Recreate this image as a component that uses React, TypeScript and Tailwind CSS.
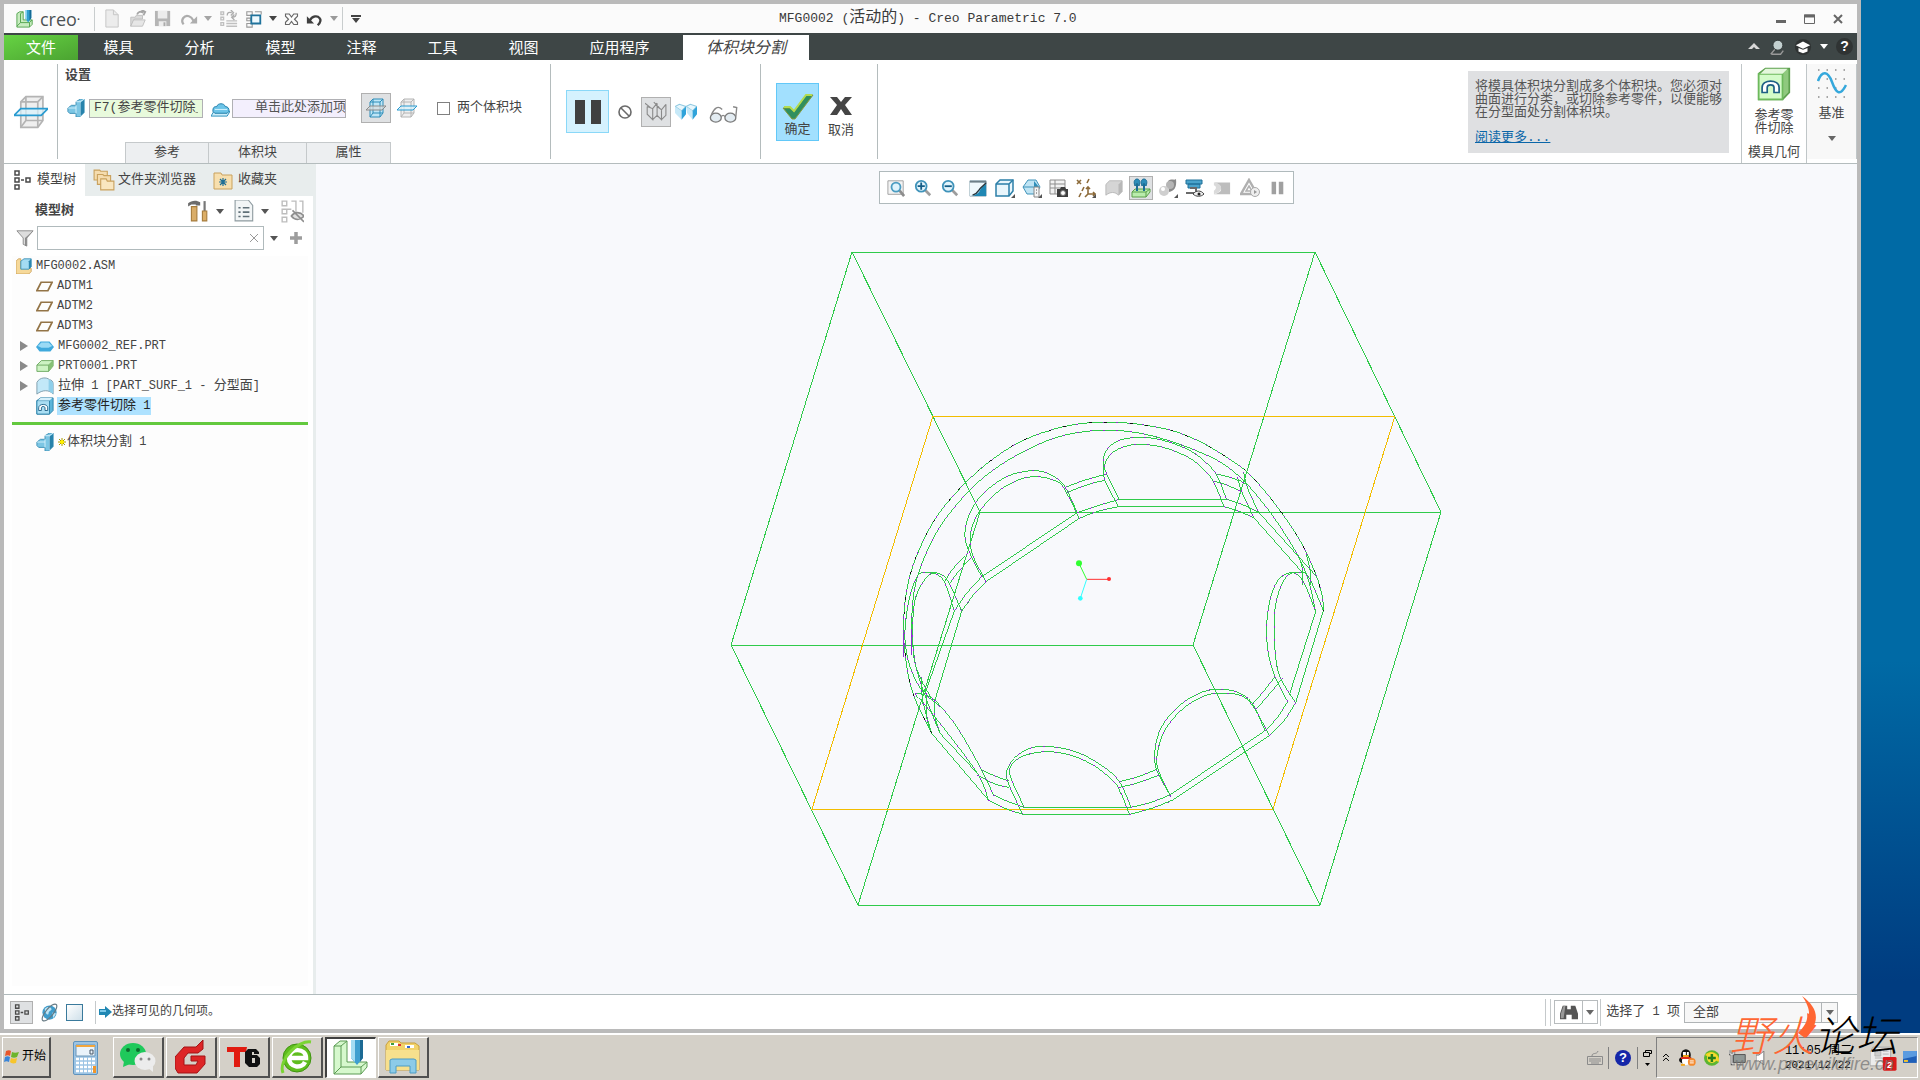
import React from 'react';

type IconProps = { size?: number; className?: string; children: React.ReactNode };

const Icon = ({ size = 20, className = '', children }: IconProps) => (
  <svg width={size} height={size} viewBox="0 0 20 20" fill="none" className={`shrink-0 ${className}`} aria-hidden="true">
    {children}
  </svg>
);

const Caret = ({ className = '' }: { className?: string }) => (
  <svg width="8" height="5" viewBox="0 0 8 5" className={`shrink-0 ${className}`} fill="currentColor" aria-hidden="true">
    <path d="M0 0h8L4 5z" />
  </svg>
);

// Chinese runs keep the parent size, latin runs are set a step smaller in mono
const Mixed = ({ text, latin = 'text-xs' }: { text: string; latin?: string }) => (
  <>
    {text.split(/([\x20-\x7e]+)/).map((part, i) =>
      i % 2 ? <span key={i} className={`whitespace-pre ${latin}`}>{part}</span> : part
    )}
  </>
);

/* ---------- icons ---------- */

const CreoMark = ({ size = 20 }: { size?: number }) => (
  <Icon size={size}>
    <path d="M1 4l3-2h4v9h10v5l-3 3H1z" fill="#c8ecc0" stroke="#4ea14a" />
    <path d="M5 4v10h10M5 14l-4 4M5 4l3-2M15 14l3-3M15 14v5" stroke="#4ea14a" />
    <path d="M10 0h7v9l-3.500 5L10 9z" fill="#2f9fd0" />
    <path d="M10 0h2v11l-2-2z" fill="#9bdcf4" />
    <path d="M15 0h2v9l-2 3z" fill="#146a94" />
  </Icon>
);

const SplitCube = ({ size = 20, blue = false }: { size?: number; blue?: boolean }) => {
  const line = blue ? '#2f8db8' : '#b4b4b4';
  return (
    <Icon size={size}>
      <path d="M4 4l3-3h10v14l-3 4H4z" fill={blue ? '#bfe6f7' : '#efefef'} stroke={line} />
      <path d="M4 4h10v15M14 4l3-3M7 1v14h10M7 15l-3 4" stroke={line} />
      <path d="M0 12l4-4h16l-4 4z" fill={blue ? '#dddddd' : '#d9f2fc'} fillOpacity=".7" stroke={blue ? '#8b8b8b' : '#2a9bd0'} />
    </Icon>
  );
};

const VolumeIcon = ({ size = 18 }: { size?: number }) => (
  <Icon size={size}>
    <path d="M1 10l4-3h5V3l5-3h4v15l-5 5h-4v-4H3l-2-2z" fill="#7cc6e4" stroke="#3a8fb5" />
    <path d="M10 3h5v16M15 3l4-3M1 10h9M10 7v9" stroke="#d6f2fd" />
    <path d="M15 4l4-3v14l-4 4z" fill="#2782ab" />
  </Icon>
);

const PartDome = ({ size = 18 }: { size?: number }) => (
  <Icon size={size}>
    <path d="M0 11l5-6h10l5 6-4 5H4z" fill="#3fa9dc" />
    <path d="M2 10l4-4h8l4 4-4 2H6z" fill="#9adaf5" />
  </Icon>
);

const DomeOnPlate = () => (
  <Icon size={19}>
    <path d="M0 18l3-5h17l-3 5z" fill="#cdeefa" stroke="#2a8fbd" />
    <path d="M2 13c0-4 1-5 4-5 1-4 8-4 9 0 3 0 4 2 4 5l-2 2H4z" fill="#6cc4e8" stroke="#1f7ba8" />
    <path d="M4 11h13" stroke="#d6f2fd" />
  </Icon>
);

const CutIcon = ({ size = 18, green = false }: { size?: number; green?: boolean }) => (
  <Icon size={size}>
    <path d="M1 4l4-3h14v14l-4 4H1z" fill={green ? '#8fc97e' : '#5cb5da'} stroke={green ? '#5da04e' : '#2880a8'} />
    <path d="M1 4h14v15H1z" fill={green ? '#d3fbc9' : '#a9def3'} stroke={green ? '#6db95c' : '#2880a8'} />
    <path d="M2 4l3-3h13l-3 3z" fill={green ? '#e4f7dc' : '#d5f0fb'} />
    <path d="M3 15v-3c0-5 10-5 10 0v3h-3v-3c0-2-4-2-4 0v3z" fill="#fff" stroke="#1d5f84" />
  </Icon>
);

const TreeIcon = ({ size = 18, color = '#4a4a4a' }: { size?: number; color?: string }) => (
  <Icon size={size}>
    <path d="M3 1h4v4H3zM3 8h4v4H3zM3 15h4v4H3zM14 8h4v4h-4zM9 10h3" stroke={color} strokeWidth="1.500" />
  </Icon>
);

const PlaneIcon = () => (
  <Icon size={17}>
    <path d="M1 15L6 5h13l-5 10z" stroke="#937447" strokeWidth="2" />
  </Icon>
);

const AsmIcon = () => (
  <Icon size={16}>
    <path d="M0 4l3-3h3v12h13v4l-3 3H0z" fill="#f6d99a" stroke="#c99c52" />
    <path d="M6 4l4-3h9v10l-3 3H6z" fill="#a4dcf3" stroke="#2a86ae" />
    <path d="M16 4l3-3v10l-3 3z" fill="#2d88b0" />
  </Icon>
);

const GreenPart = () => (
  <Icon size={18}>
    <path d="M1 9l5-5h13v6l-5 6H1z" fill="#cdf3c3" stroke="#6aa65e" />
    <path d="M1 9h13l5-5M14 9v7" stroke="#6aa65e" />
    <path d="M14 9l5-5v6l-5 6z" fill="#86c077" />
  </Icon>
);

const SurfIcon = () => (
  <Icon size={18}>
    <path d="M1 19V6c3-6 11-6 14-3 2 0 4 2 4 4v12c-4-5-12-5-18 0z" fill="#c2e8f8" stroke="#7a98a8" />
    <path d="M14 3c2 0 5 2 5 5v11l-5-4z" fill="#8fcfea" />
  </Icon>
);

const Magnifier = ({ sign }: { sign?: '+' | '-' }) => (
  <Icon size={18}>
    <path d="M12 12l6 6" stroke="#9d9d9d" strokeWidth="3" />
    <circle cx="8" cy="8" r="6" fill="#e2f4fc" stroke="#3f93ba" strokeWidth="2" />
    {sign && <path d={sign === '+' ? 'M4 8h8M8 4v8' : 'M4 8h8'} stroke="#155d86" strokeWidth="2" />}
  </Icon>
);

const Corner = () => <path d="M20 16v4h-4z" fill="#555" />;

const viewTools: { label: string; active?: boolean; icon: React.ReactNode }[] = [
  {
    label: '重新调整',
    icon: (
      <Icon size={18}>
        <path d="M1 2h17v15H1z" fill="#f3f3f3" stroke="#9d9d9d" />
        <path d="M14 13l5 6" stroke="#8d8d8d" strokeWidth="3" />
        <circle cx="10" cy="9" r="5" fill="#dff3fc" stroke="#4b9cc1" strokeWidth="2" />
      </Icon>
    ),
  },
  { label: '放大', icon: <Magnifier sign="+" /> },
  { label: '缩小', icon: <Magnifier sign="-" /> },
  {
    label: '重画',
    icon: (
      <Icon size={18}>
        <path d="M1 2h18v17H1z" fill="#b9dceb" stroke="#8aa4b0" />
        <path d="M19 5v14H5c3-3 5-2 7-6 1-3 4-5 7-8z" fill="#1f87b3" />
        <path d="M1 19c5-2 8-3 10-7 2-3 5-4 8-7L10 3H1z" fill="#eef8fc" />
        <path d="M4 18c5-2 6-4 8-7 1-2 5-4 7-7" stroke="#26333a" strokeWidth="1.500" />
        <path d="M1 3h18" stroke="#6d7f88" strokeWidth="2" />
      </Icon>
    ),
  },
  {
    label: '显示样式',
    icon: (
      <Icon size={20}>
        <path d="M1 6l4-4h13v11l-4 5H1z" fill="#e9f6fc" stroke="#2b7fa8" strokeWidth="1.500" />
        <path d="M1 6h13v12M14 6l4-4" stroke="#2b7fa8" strokeWidth="1.500" />
        <Corner />
      </Icon>
    ),
  },
  {
    label: '已保存方向',
    icon: (
      <Icon size={20}>
        <path d="M1 9l5-7h8l4 7-4 7H5z" fill="#bfe4f4" stroke="#3f93ba" />
        <path d="M12 3l5 6h-5z" fill="#2f8fba" />
        <path d="M1 9h13" stroke="#3f93ba" />
        <path d="M12 9h5v10h-5z" fill="#f5f5f5" stroke="#888" />
        <path d="M14 12h1M14 15h1" stroke="#555" />
        <Corner />
      </Icon>
    ),
  },
  {
    label: '视图管理器',
    icon: (
      <Icon size={20}>
        <path d="M1 2h15v14H1zM1 6h15M1 10h15M6 2v14" fill="#f2f2f2" stroke="#8d8d8d" />
        <path d="M8 11h3l1-2h4l1 2h2v8H8z" fill="#3f3f3f" />
        <circle cx="14" cy="15" r="2.500" fill="#fff" stroke="#777" />
      </Icon>
    ),
  },
  {
    label: '基准显示过滤器',
    icon: (
      <Icon size={20}>
        <path d="M1 2l4 4M5 2L1 6M13 1l-2 4M8 9l-2 4M5 15l-2 4M12 9v7h7M12 16l-3 3M10 11l2-2 2 2M17 14l2 2-2 2" stroke="#8d6b3a" strokeWidth="1.600" />
        <Corner />
      </Icon>
    ),
  },
  {
    label: '注释显示',
    icon: (
      <Icon size={18}>
        <path d="M1 6l4-4h14v12l-4 4c-4-4-9-4-14 0z" fill="#d5d5d5" stroke="#b5b5b5" />
        <path d="M15 6l4-4v12l-4 4z" fill="#b8b8b8" />
      </Icon>
    ),
  },
  {
    label: '旋转中心',
    active: true,
    icon: (
      <Icon size={20}>
        <path d="M1 14l3-3h15v3l-4 5H1z" fill="#b9ecac" stroke="#5aa04b" />
        <path d="M1 14h14l4-3M15 14v5" stroke="#5aa04b" />
        <path d="M6 13V6M13 13V6" stroke="#1b6d96" strokeWidth="2" />
        <path d="M4 8C2 3 4 1 6 1s4 2 2 7L6 5zM11 8c-2-5 0-7 2-7s4 2 2 7l-2-3z" fill="#2d8db9" stroke="#1b6d96" />
      </Icon>
    ),
  },
  {
    label: '外观',
    icon: (
      <Icon size={20}>
        <path d="M10 3c4-3 6 0 8-2 1 9-2 12-7 13z" fill="#8a8a8a" />
        <circle cx="12" cy="7" r="4" fill="#b5b5b5" />
        <circle cx="6" cy="13" r="5" fill="#cfcfcf" />
        <circle cx="5" cy="11" r="2" fill="#fff" />
        <Corner />
      </Icon>
    ),
  },
  {
    label: '模具显示',
    icon: (
      <Icon size={20}>
        <path d="M1 2h16v4H1zM3 6h12v4H3z" fill="#4aa3cb" stroke="#1f7099" />
        <path d="M5 10h6v5H1" stroke="#6a6a6a" strokeWidth="2" />
        <path d="M8 16c3-4 8-4 11 0-3 3-8 3-11 0z" fill="#eee" stroke="#444" />
        <circle cx="14" cy="16" r="1.500" fill="#222" />
      </Icon>
    ),
  },
  {
    label: '剖面',
    icon: (
      <Icon size={18}>
        <path d="M1 4h18v13H1c6-2 8-3 8-6S6 5 1 4z" fill="#bdbdbd" />
        <path d="M1 4c6 1 8 3 8 6s-2 5-8 7V13c3-2 3-5 0-6z" fill="#dadada" />
      </Icon>
    ),
  },
  {
    label: '分析显示',
    icon: (
      <Icon size={20}>
        <path d="M9 2l8 14H1z" stroke="#b0b0b0" strokeWidth="2.500" />
        <path d="M9 8l3 5H6z" stroke="#b0b0b0" strokeWidth="1.500" />
        <circle cx="15" cy="14" r="4.500" fill="#eee" stroke="#aaa" />
        <path d="M14 12l3 2-3 2z" fill="#999" />
      </Icon>
    ),
  },
  {
    label: '暂停',
    icon: (
      <Icon size={18}>
        <path d="M4 3h5v14H4zM12 3h5v14h-5z" fill="#a0a0a0" />
      </Icon>
    ),
  },
];

/* ---------- title bar, menu ---------- */

const quickIcons: { label: string; caret?: string; icon: React.ReactNode }[] = [
  {
    label: '新建',
    icon: (
      <Icon size={19}>
        <path d="M3 1h8l5 5v13H3z" fill="#ececec" stroke="#c6c6c6" />
        <path d="M11 1v5h5" stroke="#c6c6c6" />
      </Icon>
    ),
  },
  {
    label: '打开',
    icon: (
      <Icon size={18}>
        <path d="M2 8h5l1-2h7v4H6l-4 8z" fill="#dadada" stroke="#bdbdbd" />
        <path d="M5 11h13l-3 7H2z" fill="#e6e6e6" stroke="#bdbdbd" />
        <path d="M9 5c1-3 4-4 7-2M14 0l4 2-2 4" stroke="#a5a5a5" strokeWidth="2" />
      </Icon>
    ),
  },
  {
    label: '保存',
    icon: (
      <Icon size={19}>
        <path d="M1 2h16v16H1z" fill="#b5b5b5" />
        <path d="M4 2h10v8H4zM5 13h8v5H5z" fill="#ececec" />
        <path d="M10 14h2v4h-2z" fill="#aaa" />
      </Icon>
    ),
  },
  {
    label: '重做',
    caret: 'text-[#a5a5a5]',
    icon: (
      <Icon size={18}>
        <path d="M4 16c-4-5 1-11 6-9 3 1 4 3 5 5" stroke="#adadad" strokeWidth="2.500" />
        <path d="M19 7v8h-8z" fill="#adadad" />
      </Icon>
    ),
  },
  {
    label: '重新生成',
    icon: (
      <Icon size={18}>
        <path d="M1 2h3v3H1zM1 8h3v3H1zM1 14h3v3H1zM7 12h12M7 15h12M7 18h12" stroke="#c0c0c0" strokeWidth="1.500" />
        <path d="M8 6c0-3 2-4 5-3M12 0l3 3-3 3M18 3c0 4-1 5-4 5M16 5l-3 3 3 3" stroke="#adadad" strokeWidth="1.500" />
      </Icon>
    ),
  },
  {
    label: '窗口',
    caret: 'text-[#444]',
    icon: (
      <Icon size={18}>
        <path d="M2 2h6v4H2zM11 2h7v3M2 9h4v3H2zM2 15h6v4H2z" stroke="#999" strokeWidth="1.200" />
        <path d="M7 6h10v9H7z" fill="#eef9fe" stroke="#20739c" strokeWidth="2" />
      </Icon>
    ),
  },
  {
    label: '关闭',
    icon: (
      <Icon size={15}>
        <path d="M2 4h5l3 4 3-4h5v3l-4 4 4 4v3h-5l-3-4-3 4H2v-3l4-4-4-4z" stroke="#666" strokeWidth="1.500" />
      </Icon>
    ),
  },
  {
    label: '撤消',
    caret: 'text-[#9b9b9b]',
    icon: (
      <Icon size={18}>
        <path d="M4 12c3-6 9-6 11-3 2 2 1 5-2 8" stroke="#3f3f3f" strokeWidth="2.500" />
        <path d="M1 7v8h8z" fill="#3f3f3f" />
      </Icon>
    ),
  },
];

const TitleBar = () => (
  <header className="flex h-[29px] items-center bg-[#fbfbfb] text-[16px] text-[#3a3a3a]">
    <div className="flex w-[91px] items-center gap-1.5 border-r border-[#c9cdce] pl-3">
      <CreoMark size={18} />
      <span className="font-['Open_Sans',sans-serif] text-[18px] leading-6 text-[#4c5254]">creo<sup className="text-[8px]">•</sup></span>
    </div>
    <div className="flex w-[248px] items-center justify-between border-r border-[#c9cdce] py-0.5 pr-1 pl-2">
      {quickIcons.map((q) => (
        <button key={q.label} aria-label={q.label} className="flex items-center gap-1.5">
          {q.icon}
          {q.caret && <Caret className={q.caret} />}
        </button>
      ))}
    </div>
    <button aria-label="自定义快速访问工具栏" className="pl-2">
      <svg width="10" height="8" viewBox="0 0 10 8" aria-hidden="true"><path d="M0 0h10v2H0zM1 3h8L5 8z" fill="#444" /></svg>
    </button>
    <h1 className="flex-1 pl-[418px] leading-6 whitespace-nowrap"><Mixed text="MFG0002 (活动的) - Creo Parametric 7.0" latin="text-[13px]" /></h1>
    <div className="flex items-center gap-[18px] pr-3.5 text-[#666]">
      <button aria-label="最小化"><svg width="10" height="10" viewBox="0 0 10 10"><path d="M0 6h10v3H0z" fill="currentColor" /></svg></button>
      <button aria-label="最大化"><svg width="11" height="10" viewBox="0 0 11 10" fill="none"><path d="M.5 1h10v8.500H.5z" stroke="currentColor" /><path d="M0 2h11" stroke="currentColor" strokeWidth="3" /></svg></button>
      <button aria-label="关闭窗口"><svg width="10" height="10" viewBox="0 0 10 10"><path d="M1 1l8 8M9 1L1 9" stroke="currentColor" strokeWidth="2" /></svg></button>
    </div>
  </header>
);

const menus = ['模具', '分析', '模型', '注释', '工具', '视图'];

const MenuBar = () => (
  <nav className="flex h-[27px] items-end bg-[#3e4646] text-[15px] leading-[25px] text-white">
    <button className="h-[25px] w-[74px] bg-linear-to-br from-[#66d343] to-[#4ba331] pt-0.5">文件</button>
    {menus.map((m) => (
      <button key={m} className="h-[25px] w-[81px] pt-0.5">{m}</button>
    ))}
    <button className="mr-2 h-[25px] w-[111px] pt-0.5">应用程序</button>
    <button className="h-[25px] w-[126px] bg-white pt-0.5 text-base leading-[25px] text-[#444] italic">体积块分割</button>
    <div className="ml-auto flex h-full items-center gap-2 pr-1">
      <button aria-label="收起功能区"><svg width="12" height="12" viewBox="0 0 12 12"><path d="M0 8l6-6 6 6H8L6 6 4 8z" fill="#d8d8d8" /></svg></button>
      <button aria-label="搜索"><Icon size={18}><path d="M9 11l-6 7M4 18h10l3-4" stroke="#999" strokeWidth="1.500" /><circle cx="11" cy="8" r="5.500" fill="#c3d0d0" stroke="#2e3333" /></Icon></button>
      <button aria-label="学习中心" className="flex items-center gap-2">
        <Icon size={18}><circle cx="10" cy="10" r="9" fill="#2f3333" /><path d="M2 8l8-4 8 4-8 4zM5 11v4l5 2 5-2v-4l-5 2z" fill="#fff" /></Icon>
        <Caret />
      </button>
      <button aria-label="帮助" className="size-[17px] rounded-full bg-[#2f3333] font-['Liberation_Sans',sans-serif] text-[14px] leading-[17px] font-bold">?</button>
    </div>
  </nav>
);

/* ---------- ribbon ---------- */

const Ribbon = () => (
  <section className="flex h-[104px] border-b border-[#b4bcbd] bg-white text-[13px] text-[#444]">
    <div className="my-1 flex w-[54px] items-center justify-center border-r border-[#b4bcbd]">
      <SplitCube size={34} />
    </div>
    <div className="my-1 flex w-[493px] flex-col border-r border-[#b4bcbd] pl-[7px]">
      <h2 className="pt-0.5 leading-5 font-bold">设置</h2>
      <div className="mt-1.5 flex h-8 items-center">
        <span className="mr-1 ml-0.5"><VolumeIcon size={18} /></span>
        <input aria-label="参考零件" defaultValue="F7(参考零件切除_" className="h-[19px] w-[114px] border border-[#b0b0b4] bg-[#e8fadc] px-1" />
        <span className="mr-0.5 ml-2"><DomeOnPlate /></span>
        <input aria-label="分割曲面" defaultValue="单击此处添加项" className="h-[19px] w-[114px] border border-[#b0b0b4] bg-[#f3effd] pl-[22px] text-[#555]" />
        <button aria-label="按体积块分割" className="ml-[15px] flex size-[30px] items-center justify-center border border-[#b0b0b0] bg-[#dfe1e3]"><SplitCube size={20} blue /></button>
        <button aria-label="按平面分割" className="ml-1.5"><SplitCube size={20} /></button>
        <label className="ml-5 flex items-center gap-[7px]">
          <input type="checkbox" className="size-[13px] appearance-none border border-[#808080] bg-white" />
          两个体积块
        </label>
      </div>
      <div className="mt-auto -mb-1 ml-[60px] flex">
        <button className="h-[21px] w-[84px] border border-b-0 border-[#c5c9cb] bg-[#edeff1]">参考</button>
        <button className="h-[21px] w-[98px] border border-b-0 border-l-0 border-[#c5c9cb] bg-[#edeff1]">体积块</button>
        <button className="h-[21px] w-[84px] border border-b-0 border-l-0 border-[#c5c9cb] bg-[#edeff1]">属性</button>
      </div>
    </div>
    <div className="my-1 flex w-[210px] items-center border-r border-[#b4bcbd] pl-[15px]">
      <button aria-label="暂停" className="flex h-[43px] w-[43px] items-center justify-center gap-1.5 border border-[#8ad8f8] bg-[#d5f2fe]">
        <span className="h-6 w-2.5 bg-[#404040]" />
        <span className="h-6 w-2.5 bg-[#404040]" />
      </button>
      <button aria-label="无预览" className="ml-2"><Icon size={16}><circle cx="10" cy="10" r="7.500" stroke="#6a6a6a" strokeWidth="2" /><path d="M5 5l10 10" stroke="#6a6a6a" strokeWidth="2" /></Icon></button>
      <button aria-label="分离预览" className="ml-2 flex size-[30px] items-center justify-center border border-[#b0b0b0] bg-[#dfe1e3]">
        <Icon size={22}><path d="M2 5l5 2 4-5M2 5v7l5 5V7M7 17l4-4V2M11 5l4 3 4-5M11 13l4 4V8M15 17l4-4V3M0 2l5 4M8 1l5 5" stroke="#8a8a8a" /></Icon>
      </button>
      <button aria-label="连接预览" className="ml-1">
        <Icon size={22}><path d="M0 5l4-2 6 2-4 4zM10 5l4-2 6 2-4 4z" fill="#e8f7fd" stroke="#8fc8e0" /><path d="M0 5l6 4v8l-6-6zM10 5l6 4v8l-5-6z" fill="#c7e9f8" /><path d="M6 9l4-4v7l-4 5zM16 9l4-4v7l-4 5z" fill="#2fa3da" /></Icon>
      </button>
      <button aria-label="眼镜预览" className="mt-1 ml-3">
        <svg width="30" height="20" viewBox="0 0 32 22" fill="none"><ellipse cx="7" cy="15" rx="6" ry="5" fill="#e3ecf2" stroke="#7b7b7b" strokeWidth="1.500" /><ellipse cx="23" cy="15" rx="6" ry="5" fill="#e3ecf2" stroke="#7b7b7b" strokeWidth="1.500" /><path d="M13 14c1-2 3-2 4 0M2 12C5 5 9 1 14 6M29 14l1-10-4-1" stroke="#888" strokeWidth="1.500" /></svg>
      </button>
    </div>
    <div className="my-1 flex w-[117px] items-center border-r border-[#b4bcbd] pl-[15px]">
      <button className="flex h-[58px] w-[43px] flex-col items-center justify-end border border-[#62c8f8] bg-[#a2e0fe] leading-5">
        <svg width="32" height="26" viewBox="0 0 32 26"><path d="M1 14h7l4 4L24 1h7L13 25h-3z" fill="#2f8f5f" stroke="#8a9a3a" /><path d="M2 13h6l4 4L24 1h6" fill="none" stroke="#b3dc50" strokeWidth="2" /></svg>
        确定
      </button>
      <button className="ml-[7px] flex h-[58px] flex-col items-center justify-end px-0.5 leading-5">
        <svg width="22" height="18" viewBox="0 0 22 18" className="mb-1.5"><path d="M0 0h7l4 5 4-5h7l-7 8 7 10h-7l-4-6-4 6H0l7-10z" fill="#454545" /></svg>
        取消
      </button>
    </div>
    <div className="flex flex-1 items-start justify-end pt-[11px] pr-3">
      <div className="h-[82px] w-[261px] bg-[#dfe0e2] px-[7px] pt-[9px] leading-[13px] text-[#555]">
        <p>将模具体积块分割成多个体积块。您必须对曲面进行分类，或切除参考零件，以便能够在分型面处分割体积块。</p>
        <a href="#more" className="mt-3 inline-block text-[#0a66a8] underline">阅读更多...</a>
      </div>
    </div>
    <div className="mt-1 flex w-[66px] flex-col items-center border-x border-[#c0c6c8] leading-[13px]">
      <button className="flex w-[39px] flex-col items-center gap-2 pt-[3px]">
        <CutIcon size={34} green />
        参考零件切除
      </button>
      <span className="mt-auto pb-1 whitespace-nowrap">模具几何</span>
    </div>
    <button className="my-1 flex w-[50px] flex-col items-center justify-start border-r border-[#c0c6c8] bg-[#f8f8f8] pt-1 leading-5">
      <svg width="30" height="32" viewBox="0 0 30 32" fill="none">
        <path d="M1 2h28M1 11h28M1 20h28M1 29h28" stroke="#8a8a8a" strokeDasharray="1.500 7" strokeWidth="1.500" />
        <path d="M1 13C5 2 11 3 15 14s8 15 14 3" stroke="#35a8dc" strokeWidth="2.500" />
      </svg>
      <span className="mt-1">基准</span>
      <Caret className="mt-3 text-[#666]" />
    </button>
  </section>
);

/* ---------- model tree ---------- */

const FolderIcon = ({ star = false }: { star?: boolean }) => (
  <Icon size={star ? 20 : 22}>
    {star ? (
      <>
        <path d="M1 3h7l1 2h10v14H1z" fill="#f7dfae" stroke="#c9a15d" />
        <path d="M6 12h8M10 8v8M7 9l6 6M13 9l-6 6" stroke="#1f6f95" strokeWidth="1.200" />
      </>
    ) : (
      <>
        <path d="M1 1h5l1 1h6v8H1z" fill="#f5dcae" stroke="#c9a15d" />
        <path d="M4 5h5l1 1h6v8H4z" fill="#f5dcae" stroke="#c9a15d" />
        <path d="M7 9h5l1 2h6v8H7z" fill="#f9e6bf" stroke="#c9a15d" />
      </>
    )}
  </Icon>
);

type Node = { name: string; icon: React.ReactNode; root?: boolean; expandable?: boolean; selected?: boolean };

const nodes: Node[] = [
  { name: 'MFG0002.ASM', icon: <AsmIcon />, root: true },
  { name: 'ADTM1', icon: <PlaneIcon /> },
  { name: 'ADTM2', icon: <PlaneIcon /> },
  { name: 'ADTM3', icon: <PlaneIcon /> },
  { name: 'MFG0002_REF.PRT', icon: <PartDome />, expandable: true },
  { name: 'PRT0001.PRT', icon: <GreenPart />, expandable: true },
  { name: '拉伸 1 [PART_SURF_1 - 分型面]', icon: <SurfIcon />, expandable: true },
  { name: '参考零件切除 1', icon: <CutIcon />, selected: true },
];

const TreeRow = ({ node }: { node: Node }) => (
  <li className={`flex h-5 items-center ${node.root ? 'pl-1' : 'pl-2'}`}>
    {!node.root && (
      <span className="w-4">
        {node.expandable && (
          <svg width="8" height="10" viewBox="0 0 8 10"><path d="M0 0l8 5-8 5z" fill="#8a8a8a" /></svg>
        )}
      </span>
    )}
    {node.icon}
    <span className={`ml-[3px] px-px leading-[18px] whitespace-nowrap ${node.selected ? 'bg-[#aee2ff] text-[#222]' : ''}`}>
      <Mixed text={node.name} />
    </span>
  </li>
);

const ModelTree = () => (
  <aside className="flex w-[312px] shrink-0 flex-col border-r-3 border-[#e8eded] bg-white text-[13px] text-[#444]">
    <div className="-mr-[3px] flex h-8 bg-[#e8eded]">
      <button className="flex w-[81px] items-center gap-[5px] bg-white pl-2"><TreeIcon size={20} />模型树</button>
      <button className="flex w-[118px] items-center gap-[3px] pl-2"><FolderIcon />文件夹浏览器</button>
      <button className="flex items-center gap-[5px] pl-2.5"><FolderIcon star />收藏夹</button>
    </div>
    <div className="flex h-7 items-center pt-0.5 pl-[31px]">
      <h2 className="w-[152px] font-bold">模型树</h2>
      <button aria-label="设置" className="flex items-center gap-[7px] text-[#555]">
        <Icon size={22}>
          <path d="M1 3c3-3 8-3 11-1v3H8V4H4L1 6z" fill="#6c6c6c" />
          <path d="M4 6h5v13H4z" fill="#d9ad68" stroke="#a67c3c" />
          <path d="M16 1v9" stroke="#777" strokeWidth="2" /><path d="M14 10h4v9h-4z" fill="#dcae66" stroke="#a67c3c" />
        </Icon>
        <Caret />
      </button>
      <button aria-label="显示" className="ml-2.5 flex items-center gap-[5px] text-[#555]">
        <Icon size={22}><path d="M1 0h12l4 5v14H1z" fill="#f2f5f6" stroke="#8e9ba0" /><path d="M8 7h6M8 11h6M8 15h6M4 7h2M4 11h2M4 15h2" stroke="#607078" strokeWidth="1.500" /></Icon>
        <Caret />
      </button>
      <button aria-label="隐藏树列" className="ml-3"><Icon size={23}><path d="M1 1h4v4H1zM1 8h4v4H1zM1 15h4v4H1zM9 1h4v10M16 1h3v10M9 8H5" stroke="#bdbdbd" strokeWidth="1.200" /><path d="M9 14c3-4 8-4 11 0-3 4-8 4-11 0zM10 9l10 10" fill="#e0e0e0" stroke="#8e8e8e" strokeWidth="1.400" /></Icon></button>
    </div>
    <div className="mt-0.5 flex h-6 items-center pl-3">
      <Icon size={18}><path d="M1 2h18l-7 8v9l-4-2v-7z" fill="#ddd" stroke="#888" /><path d="M19 2l-7 8v9h-2v-9z" fill="#8a8a8a" /></Icon>
      <div className="ml-[3px] flex h-6 w-[227px] items-center border border-[#b0babc] bg-white pr-[5px]">
        <input aria-label="筛选" type="text" className="min-w-0 flex-1 outline-none" />
        <button aria-label="清除"><svg width="8" height="8" viewBox="0 0 8 8"><path d="M0 0l8 8M8 0L0 8" stroke="#999" /></svg></button>
      </div>
      <Caret className="ml-1.5 text-[#555]" />
      <button aria-label="添加" className="ml-3"><svg width="12" height="12" viewBox="0 0 12 12"><path d="M6 0v12M0 6h12" stroke="#9d9d9d" strokeWidth="3.500" /></svg></button>
    </div>
    <div className="mt-1.5 mr-[5px] mb-2 ml-2 flex-1 bg-[#fdfdfd]">
      <ul>{nodes.map((n) => <TreeRow key={n.name} node={n} />)}</ul>
      <hr className="mt-1.5 border-t-[3px] border-[#63c93e]" />
      <div className="mt-[5px] flex h-6 items-center pl-6">
        <VolumeIcon />
        <svg width="8" height="8" viewBox="0 0 8 8" className="mr-px ml-1"><path d="M4 0v8M0 4h8M1 1l6 6M7 1L1 7" stroke="#a99a00" /><path d="M3 2h2v1h1v2H5v1H3V5H2V3h1z" fill="#ffee00" /></svg>
        <span><Mixed text="体积块分割 1" /></span>
      </div>
    </div>
  </aside>
);

/* ---------- wireframe model ---------- */

type Pt = [number, number];

const toPts = (s: string): Pt[] => s.split(' ').map((p) => p.split(',').map(Number) as Pt);

// Catmull-Rom through all points
const smooth = (s: string) => {
  const p = toPts(s);
  let d = `M${p[0][0]} ${p[0][1]}`;
  for (let i = 0; i < p.length - 1; i++) {
    const a = p[i - 1] ?? p[i];
    const b = p[i];
    const c = p[i + 1];
    const e = p[i + 2] ?? c;
    d += `C${b[0] + (c[0] - a[0]) / 6} ${b[1] + (c[1] - a[1]) / 6} ${c[0] - (e[0] - b[0]) / 6} ${c[1] - (e[1] - b[1]) / 6} ${c[0]} ${c[1]}`;
  }
  return d;
};

const rim = '125,1000 85,920 60,850 45,760 41,690 47,590 75,480 140,350 240,235 340,155 430,108 530,78 620,67 700,68 780,78 860,96 940,130 1010,172 1068,213 1130,280 1190,360 1240,440 1280,530 1297,590 1300,632';

const curves = [
  rim,
  '150,1000 110,900 78,800 66,700 66,640 75,560 100,480 150,380 230,280 310,210 400,155 500,112 600,93 690,92 780,106 880,137 980,180 1043,225 1080,262 1150,350 1220,460 1255,540 1277,635',
  // pockets, clockwise from the top
  '650,222 640,190 650,150 690,120 760,112 830,124 900,152 945,185 980,225 1010,298',
  '643,240 642,200 665,160 710,138 760,133 830,145 900,175 945,212 970,245 1003,320',
  '1193,905 1155,830 1135,760 1130,680 1140,600 1165,540 1205,518 1240,545 1277,635',
  '1217,908 1170,830 1155,750 1153,650 1165,580 1190,530 1220,517 1255,530 1300,632',
  '840,1185 800,1110 795,1050 815,980 870,915 940,875 1000,868 1050,880 1088,912 1125,992',
  '843,1190 805,1110 802,1060 825,990 880,925 950,885 1010,880 1060,890 1095,928 1138,1007',
  '398,1243 352,1140 358,1095 390,1060 440,1040 500,1042 570,1060 640,1100 688,1145 723,1222',
  '403,1222 365,1140 362,1100 400,1068 470,1055 540,1065 600,1090 650,1125 685,1163 718,1243',
  '193,633 165,550 140,523 110,517 85,525 65,570 50,640 45,720 60,800 95,870 135,900',
  '215,633 175,545 150,522 125,520 100,545 75,600 68,690 75,790 110,870 130,900',
  '275,530 240,460 225,410 235,350 275,285 340,235 400,215 455,214 500,235 526,262 562,338',
  '288,545 250,470 240,420 250,370 275,325 330,270 390,238 440,230 490,240 520,262 568,355',
  // blends between pockets
  '526,262 580,242 650,222',
  '532,277 590,255 645,240',
  '562,338 620,318 688,298',
  '568,355 620,335 685,320',
  '275,530 230,580 193,633',
  '288,545 250,585 215,633',
  '232,460 190,505 165,543',
  '243,475 205,515 178,553',
  '75,880 150,970 262,1120 295,1200',
  '135,900 200,980 275,1110 310,1185',
  '275,1110 320,1130 358,1143',
  '262,1125 310,1150 358,1163',
  '295,1200 345,1225 398,1243',
  '310,1185 355,1205 403,1222',
  '132,900 135,950 150,1000',
  '95,830 98,900 125,1000',
  '110,880 110,950 125,1000',
  '75,880 105,885 150,920',
  '688,1145 745,1130 800,1108',
  '685,1163 745,1148 808,1125',
  '723,1222 780,1208 840,1185',
  '718,1243 785,1225 848,1200',
  '1088,912 1120,875 1155,830',
  '1098,928 1140,880 1177,835',
  '1125,992 1160,955 1193,905',
  '1138,1007 1180,965 1217,908',
  '980,222 1030,235 1073,255',
  '970,243 1010,255 1055,275',
  '1010,298 1060,315 1107,338',
  '1003,320 1050,335 1093,355',
  '1043,232 1055,275 1093,355',
  '1060,215 1075,270 1107,338',
  '1225,465 1238,510 1238,555',
  '1248,460 1260,510 1262,555',
];

const edges = [
  '688,298 1010,298',
  '685,320 1003,320',
  '650,222 688,298',
  '643,240 685,320',
  '562,338 275,530',
  '568,355 288,545',
  '193,633 105,880',
  '215,633 135,900',
  '125,1000 295,1200',
  '150,1000 262,1120',
  '403,1222 723,1222',
  '398,1243 718,1243',
  '840,1185 1125,992',
  '848,1200 1138,1007',
  '1277,635 1198,885',
  '1300,632 1217,908',
  '1107,338 1280,530',
  '1093,355 1235,515',
];

const box = 'M852 252H1315L1441 512L1320 905H858L731 645ZM852 252L980 512H1441M980 512L858 905M731 645H1193L1315 252M1193 645L1320 905';

const Wireframe = () => (
  <svg width="1541" height="830" viewBox="316 164 1541 830" fill="none" shapeRendering="crispEdges" className="block">
    <path d={box} stroke="#2fcb4a" />
    <path d="M933 416H1395L1273 809H812Z" stroke="#f2bd00" />
    <g transform="translate(890 400) scale(.33333)" strokeWidth="3">
      {curves.map((c) => (
        <g key={c}>
          <path d={smooth(c)} stroke="#2fcb4a" />
          <path d={smooth(c)} stroke="#9030d0" strokeDasharray="6 34" />
        </g>
      ))}
      {edges.map((e) => (
        <polyline key={e} points={e} stroke="#2fcb4a" />
      ))}
      <path d={smooth(rim)} stroke="#101010" strokeDasharray="7 38 9 70" />
      <path d="M42 700V770M66 690V765" stroke="#9030d0" />
      <g shapeRendering="auto">
        <path d="M590 538H657" stroke="#ff3030" />
        <path d="M590 538L567 490" stroke="#30ff30" />
        <path d="M590 538L571 595" stroke="#30ffff" />
        <circle cx="657" cy="537" r="6" fill="#ff3030" stroke="none" />
        <circle cx="567" cy="490" r="9" fill="#30ff30" stroke="none" />
        <circle cx="571" cy="595" r="7" fill="#30ffff" stroke="none" />
      </g>
    </g>
  </svg>
);

const Viewport = () => (
  <main className="relative min-w-0 flex-1 overflow-hidden bg-[#f8f9fc]">
    <Wireframe />
    <div role="toolbar" className="absolute top-[7px] left-[563px] flex h-[33px] w-[415px] items-center justify-between border border-[#b0babc] bg-white px-1">
      {viewTools.map((t) => (
        <button
          key={t.label}
          aria-label={t.label}
          className={`flex size-6 items-center justify-center ${t.active ? 'border border-[#b0b0b0] bg-[#dfe1e3]' : ''}`}
        >
          {t.icon}
        </button>
      ))}
    </div>
  </main>
);

/* ---------- status bar ---------- */

const StatusBar = () => (
  <footer className="flex h-[35px] items-center border-t border-[#b0babc] bg-white text-[13px] text-[#444]">
    <div className="flex items-center gap-[7px] border-r border-[#c5c9cb] pr-3 pl-1.5">
      <button aria-label="模型树" className="flex size-[23px] items-center justify-center border border-[#b0b0b0] bg-[#dfe1e3]"><TreeIcon size={17} /></button>
      <button aria-label="浏览器">
        <Icon size={19}><circle cx="10" cy="10" r="7.500" fill="#3f9ccb" /><path d="M5 6c3-3 6-2 7 0s-3 2-3 5-4 0-4-5zM13 10l4 1-3 5z" fill="#bfe4f4" /><ellipse cx="10" cy="10" rx="11" ry="4" transform="rotate(-50 10 10)" stroke="#667a84" strokeWidth="1.200" /></Icon>
      </button>
      <button aria-label="全屏" className="size-[17px] border border-[#3a7a9c] bg-linear-to-br from-white to-[#cfe0ea]" />
    </div>
    <svg width="13" height="12" viewBox="0 0 13 12" className="ml-[3px]"><path d="M0 3h6V0l7 6-7 6V9H0z" fill="#1f87b3" /><path d="M1 4h6v2H1z" fill="#7cc8e8" /></svg>
    <p className="text-xs">选择可见的几何项。</p>
    <div className="ml-auto flex items-center pr-[19px]">
      <span className="mr-[3px] h-[27px] w-1.5 border-x border-[#c5c9cb]" />
      <div className="flex h-6 w-11 border border-[#b8bcbe]">
        <button aria-label="查找" className="flex w-7 items-center justify-center border-r border-[#b8bcbe]">
          <Icon size={18}><path d="M3 3h5v4h4V3h5l3 9v6h-7v-5H7v5H0v-6z" fill="#555" /><path d="M4 3h2l-2 14H1v-5z" fill="#999" /></Icon>
        </button>
        <button aria-label="查找选项" className="flex flex-1 items-center justify-center text-[#666]"><Caret /></button>
      </div>
      <span className="mx-0.5 h-[27px] border-l border-[#c5c9cb]" />
      <span className="pl-[3px]"><Mixed text="选择了 1 项" /></span>
      <div className="relative ml-1">
        <select aria-label="选择过滤器" className="block h-[21px] w-[154px] appearance-none border border-[#b0b4b6] bg-[#f7f7f7] pl-2 text-[13px]">
          <option>全部</option>
        </select>
        <span className="pointer-events-none absolute inset-y-0 right-0 flex w-[17px] items-center justify-center border border-[#b0b4b6] text-[#666]"><Caret /></span>
      </div>
    </div>
  </footer>
);

/* ---------- taskbar ---------- */

const raised = 'border-t border-l border-r-2 border-b-2 border-t-white border-l-white border-r-[#505050] border-b-[#505050]';

const apps: { label: string; pressed?: boolean; icon: React.ReactNode }[] = [
  {
    label: '微信',
    icon: (
      <svg width="36" height="30" viewBox="0 0 36 30"><ellipse cx="13" cy="12" rx="13" ry="11" fill="#1fc95b" /><path d="M4 19l-1 6 7-3z" fill="#1fc95b" /><circle cx="8" cy="8" r="2" fill="#0d6b2e" /><circle cx="18" cy="8" r="2" fill="#0d6b2e" /><ellipse cx="25" cy="19" rx="10.500" ry="9" fill="#ececec" /><path d="M28 26l5 4v-6z" fill="#ececec" /><circle cx="21" cy="17" r="1.500" fill="#888" /><circle cx="29" cy="17" r="1.500" fill="#888" /></svg>
    ),
  },
  {
    label: '浩辰',
    icon: (
      <svg width="32" height="34" viewBox="0 0 32 34"><path d="M9 7h12l7-7v9l-5 4H13l-4 5v7h12l2-4h-7v-5h14v8l-8 9H3l-3-5V17z" fill="#dd2526" stroke="#a31315" /></svg>
    ),
  },
  {
    label: 'T6',
    icon: (
      <svg width="34" height="20" viewBox="0 0 34 20"><path d="M0 0h20l-1 5h-6v15H7V5H0z" fill="#e11b10" /><path d="M21 2h8l3 3v2h-5V5h-2v3h5l3 3v6l-3 3h-8l-4-4V5zm4 9v5h3v-5z" fill="#111" fillRule="evenodd" /></svg>
    ),
  },
  {
    label: '浏览器',
    icon: (
      <svg width="34" height="34" viewBox="0 0 34 34" fill="none"><circle cx="17" cy="18" r="14" fill="#5fbd1e" stroke="#3f9410" /><path d="M9 18h17c0-10-16-11-17 0 0 10 13 11 16 4" stroke="#fff" strokeWidth="4.500" /><path d="M3 33C-2 20 18 0 31 2" stroke="#7ad433" strokeWidth="3" /></svg>
    ),
  },
  {
    label: 'Creo Parametric',
    pressed: true,
    icon: (
      <svg width="36" height="36" viewBox="0 0 36 36" fill="none"><path d="M1 6l6-5h7v21h20v5l-6 7H1z" fill="#d6f8cd" stroke="#5a9a52" /><path d="M1 6h7v21h20l6-5M8 6l6-5M8 27l-7 7M28 27v7" stroke="#5a9a52" /><path d="M18 0h12v18l-6 7-6-7z" fill="#3f9fd0" /><path d="M18 0h4v22l-4-4z" fill="#a5dcf3" /><path d="M27 0h3v18l-3 4z" fill="#1c6a94" /></svg>
    ),
  },
  {
    label: '资源管理器',
    icon: (
      <svg width="36" height="34" viewBox="0 0 36 34"><path d="M1 5l3-4h10l2 2h14l4 3v24H1z" fill="#f2d36b" stroke="#c9a03c" /><path d="M5 3h8v3H5zM20 5h9v3h-9z" fill="#fff" /><path d="M6 3h3v2H6z" fill="#3f9c3f" /><path d="M13 4h3v2h-3z" fill="#d33" /><path d="M22 6h3v2h-3z" fill="#36c" /><path d="M1 10h33v20H1z" fill="#f7e08d" /><path d="M5 20l2-1h22l2 1v13h-6v-7H11v7H5z" fill="#8ccbe8" stroke="#4d9cc4" /></svg>
    ),
  },
];

const Taskbar = () => (
  <footer className="relative flex h-[47px] items-center border-t-2 border-white bg-[#d4d0c8] pr-0.5 pl-0.5 text-xs text-black">
    <button className={`flex h-[41px] w-[49px] items-center gap-0.5 pl-px ${raised}`}>
      <svg width="16" height="16" viewBox="0 0 16 16"><path d="M2 2c2-1 4-1 5 0L6 7C5 6 3 6 1 7z" fill="#e8562a" /><path d="M8 3c2 1 4 1 7 0l-2 5c-2 1-4 1-6 0z" fill="#6cb52d" /><path d="M1 8c2-1 3-1 5 0l-1 5c-2-1-3-1-5 0z" fill="#3a85d8" /><path d="M7 9c2 1 4 1 6 0l-1 5c-3 1-5 0-6-1z" fill="#f7c52b" /></svg>
      开始
    </button>
    <button aria-label="计算器" className="mr-[15px] ml-[22px]">
      <svg width="25" height="34" viewBox="0 0 25 34"><rect x=".5" y=".5" width="24" height="33" rx="1.500" fill="#9cc4e4" stroke="#5f93bd" /><path d="M3 4h19v11H3z" fill="#eaf3fa" stroke="#6c96b8" /><path d="M3 4h19v2H3z" fill="#f3a63c" /><path d="M17 9h3v4h-3z" fill="none" stroke="#456" /><path d="M3 18h19M3 22h19M3 26h19M3 30h19" stroke="#fff" strokeWidth="2.500" strokeDasharray="3 1" /><path d="M20 25h3v7h-3z" fill="#f0952a" /></svg>
    </button>
    <div className="flex gap-0.5">
      {apps.map((a) => (
        <button
          key={a.label}
          aria-label={a.label}
          className={`flex h-[41px] w-[51px] items-center justify-center ${a.pressed ? 'border-t-2 border-r border-b border-l-2 border-t-[#404040] border-r-white border-b-white border-l-[#404040] bg-white' : raised}`}
        >
          {a.icon}
        </button>
      ))}
    </div>
    <div className="ml-auto flex items-center">
      <svg width="16" height="15" viewBox="0 0 16 15" fill="none"><path d="M.5 6.500h15v8H.5zM2 9h12M2 11h12M4 13h8M5 6c0-4 5-1 6-5" stroke="#8b8b8b" /></svg>
      <span className="mx-[5px] h-[22px] border-l border-[#808080]" />
      <button aria-label="帮助" className="mx-px size-4 rounded-full bg-[#1526a8] font-['Liberation_Sans',sans-serif] text-[13px] leading-4 font-bold text-white">?</button>
      <span className="mx-[5px] h-[22px] border-l border-[#808080]" />
      <div className="mr-1 flex flex-col items-center gap-1.5">
        <svg width="9" height="7" viewBox="0 0 9 7" fill="none"><path d="M2.500 2V.5h6v3H7M.5 2.500h6v4h-6z" stroke="#000" /></svg>
        <svg width="5" height="3" viewBox="0 0 5 3"><path d="M0 0h5L2.500 3z" /></svg>
      </div>
      <div className="flex h-[41px] w-[262px] items-center border border-t-[#808080] border-r-white border-b-white border-l-[#808080] pl-1.5">
        <svg width="6" height="9" viewBox="0 0 6 9" fill="none"><path d="M0 4l3-3 3 3M0 8l3-3 3 3" stroke="#000" /></svg>
        <svg width="17" height="17" viewBox="0 0 17 17" className="ml-2.5"><ellipse cx="7" cy="6" rx="5" ry="6" fill="#111" /><ellipse cx="7" cy="11" rx="7" ry="4" fill="#111" /><ellipse cx="7" cy="12" rx="4" ry="4" fill="#fff" /><path d="M4 3h3v3H4zM8 3h2v3H8z" fill="#fff" /><path d="M4 6h6v2H4z" fill="#f6a81c" /><path d="M2 8h10v2H2z" fill="#df2b1d" /><path d="M2 15h4v2H2z" fill="#f6a81c" /><circle cx="13" cy="13" r="4" fill="#f58b2f" /><path d="M11 12h4M11 14h4" stroke="#fff" /></svg>
        <svg width="16" height="16" viewBox="0 0 16 16" className="ml-2"><circle cx="8" cy="8" r="8" fill="#5cb531" /><path d="M1 5a8 8 0 0114 7" fill="#f2d421" /><circle cx="8" cy="8" r="5" fill="#f5dd36" /><path d="M8 4v8M4 8h8" stroke="#25801b" strokeWidth="2.500" /></svg>
        <svg width="17" height="16" viewBox="0 0 17 16" fill="none" className="ml-2.5"><path d="M4.500 4.500h12v8h-12zM8 15h6" fill="#8f9896" stroke="#555" /><path d="M1 0v4h4V0M3 4v10h3" stroke="#555" strokeWidth="2.500" /><path d="M1 0v4h4V0M3 4v10h3" stroke="#fff" /></svg>
        <svg width="9" height="14" viewBox="0 0 9 14" className="ml-2.5"><path d="M0 4h3l5-4v14l-5-4H0z" fill="#fff" stroke="#777" /></svg>
        <div className="ml-5 w-[72px] leading-[13px]"><p className="whitespace-pre"><Mixed text="11:05 周二" /></p><p className="text-[11px]">2021/12/22</p></div>
        <svg width="28" height="28" viewBox="0 0 28 28" className="ml-3.5"><path d="M3 3h18v19H0V8z" fill="#ececec" stroke="#a5a5a5" /><path d="M5 7h6v5H5zM13 7h6M13 10h6M5 14h14M5 17h14" fill="#ccc" stroke="#b5b5b5" /><rect x="13" y="13" width="14" height="14" rx="1.500" fill="#d91a1a" /><text x="17" y="24" fontSize="10" fontWeight="700" fill="#fff">2</text></svg>
        <svg width="14" height="13" viewBox="0 0 14 13" className="ml-1.5"><path d="M0 0h14v12H0z" fill="#1e5fb8" /><path d="M0 0h14v5L0 8z" fill="#5a9be0" /><path d="M1 9h4v2H1z" fill="#f2c430" /></svg>
      </div>
    </div>
    <div className="pointer-events-none absolute right-[22px] bottom-2 flex flex-col items-end whitespace-nowrap italic">
      <div className="flex items-end text-[42px] leading-[32px] font-light">
        <span className="text-[#ff6633]">野火</span>
        <span className="text-black">论坛</span>
      </div>
      <span className="mr-1 font-['Liberation_Sans',sans-serif] text-[18px] leading-4 text-[#777]/75">www.proewildfire.cn</span>
      <svg width="18" height="42" viewBox="0 0 18 42" className="absolute top-[-28px] left-[68px]"><path d="M4 0c18 13 18 27 3 42l-7-5c8-8 10-13 9-20 4 4 2-8-5-17z" fill="#ff6633" /></svg>
    </div>
  </footer>
);

const App: React.FC = () => {
  return (
    <div className="flex h-screen flex-col overflow-hidden font-['Liberation_Mono','Noto_Sans_CJK_SC',monospace]">
      <div className="flex min-h-0 flex-1 bg-linear-to-b from-[#006aa5] from-64% to-[#003c80] to-95%">
        <div className="mr-[59px] flex min-w-0 flex-1 flex-col border-4 border-[#bababa] bg-white">
          <TitleBar />
          <MenuBar />
          <Ribbon />
          <div className="flex min-h-0 flex-1">
            <ModelTree />
            <Viewport />
          </div>
          <StatusBar />
        </div>
      </div>
      <Taskbar />
    </div>
  );
};

export default App;
